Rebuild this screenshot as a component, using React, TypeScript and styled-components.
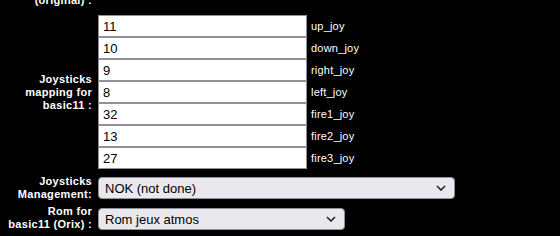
import styled, { createGlobalStyle } from "styled-components";

const GlobalStyle = createGlobalStyle`
  html, body {
    margin: 0;
    background: #000;
  }
  body {
    font-family: "Liberation Sans", Arial, sans-serif;
    overflow: hidden;
  }
`;

const joystickKeys = [
  { value: "11", name: "up_joy" },
  { value: "10", name: "down_joy" },
  { value: "9", name: "right_joy" },
  { value: "8", name: "left_joy" },
  { value: "32", name: "fire1_joy" },
  { value: "13", name: "fire2_joy" },
  { value: "27", name: "fire3_joy" },
];

const Chevron = () => (
  <ChevronSvg width="10" height="6" viewBox="0 0 10 6">
    <path d="M1 1 L5 5 L9 1" fill="none" stroke="#222" strokeWidth="1.6" />
  </ChevronSvg>
);

const App = () => {
  return (
    <>
      <GlobalStyle />
      <FormGrid>
        <Label>(original) :</Label>
        <div />

        <Label $offset={2}>
          Joysticks
          <br />
          mapping for
          <br />
          basic11 :
        </Label>
        <KeyList>
          {joystickKeys.map((k) => (
            <KeyRow key={k.name}>
              <KeyInput defaultValue={k.value} />
              <KeyName>{k.name}</KeyName>
            </KeyRow>
          ))}
        </KeyList>

        <Label>
          Joysticks
          <br />
          Management:
        </Label>
        <SelectWrap $width={357}>
          <Select defaultValue="nok">
            <option value="nok">NOK (not done)</option>
            <option value="ok">OK</option>
          </Select>
          <Chevron />
        </SelectWrap>

        <Label $offset={-2}>
          Rom for
          <br />
          basic11 (Orix) :
        </Label>
        <SelectWrap $width={247}>
          <Select defaultValue="atmos">
            <option value="atmos">Rom jeux atmos</option>
            <option value="basic">Rom basic</option>
          </Select>
          <Chevron />
        </SelectWrap>
      </FormGrid>
    </>
  );
};

export default App;

const FormGrid = styled.div`
  display: grid;
  grid-template-columns: 92px 1fr;
  column-gap: 6px;
  row-gap: 6px;
  margin-top: -6px;
  align-items: center;
`;

const Label = styled.div<{ $offset?: number }>`
  color: #fff;
  font-weight: bold;
  font-size: 11px;
  letter-spacing: 0.3px;
  line-height: 13px;
  text-align: right;
  margin-top: ${({ $offset }) => $offset ?? 0}px;
`;

const KeyList = styled.div`
  display: flex;
  flex-direction: column;
  margin-top: 2px;
`;

const KeyRow = styled.div`
  display: flex;
  align-items: center;
`;

const KeyInput = styled.input`
  box-sizing: border-box;
  width: 209px;
  height: 22px;
  margin: 0;
  padding: 0 4px;
  border: 1px solid #8f8f9d;
  background: #fff;
  color: #000;
  font-family: "Liberation Sans", Arial, sans-serif;
  font-size: 13px;
  outline: none;
`;

const KeyName = styled.span`
  color: #fff;
  font-size: 11px;
  letter-spacing: 0.2px;
  padding-left: 4px;
`;

const SelectWrap = styled.div<{ $width: number }>`
  position: relative;
  width: ${({ $width }) => $width}px;
  height: 22px;
`;

const Select = styled.select`
  appearance: none;
  box-sizing: border-box;
  width: 100%;
  height: 22px;
  margin: 0;
  padding: 0 24px 0 6px;
  border: 1px solid #8f8f9d;
  border-radius: 4px;
  background: #e9e9ed;
  color: #000;
  font-family: "Liberation Sans", Arial, sans-serif;
  font-size: 13px;
  outline: none;
`;

const ChevronSvg = styled.svg`
  position: absolute;
  right: 9px;
  top: 8px;
  pointer-events: none;
`;
